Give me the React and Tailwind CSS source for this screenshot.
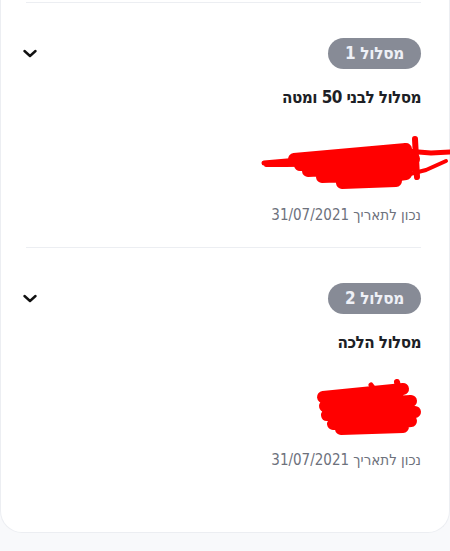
import React from "react";

const FONT = "font-['DejaVu_Sans_Condensed','Liberation_Sans','DejaVu_Sans',sans-serif]";

function Chevron() {
  return (
    <svg width="14" height="9" viewBox="0 0 14 9" className="block -ml-[3px]">
      <path d="M1.5 2 L7 7 L12.5 2" fill="none" stroke="#111" strokeWidth="2.4" strokeLinecap="round" strokeLinejoin="round" />
    </svg>
  );
}

function ScribbleWide() {
  return (
    <svg width="195" height="60" viewBox="0 0 195 60" className="absolute top-[26px] right-[-30px] overflow-visible">
      <g fill="none" stroke="#ff0000" strokeLinecap="round" strokeLinejoin="round">
        <path d="M8 28 C40 25 80 22 110 20 L150 16 L175 18 L194 17" strokeWidth="5" />
        <path d="M10 30 C50 30 90 30 130 27" strokeWidth="4" />
        <path d="M38 24 L150 14 L44 30 L158 24 L52 36 L155 31 L66 42 L150 39 L86 48 L140 46" strokeWidth="12" />
        <path d="M159 4 L161 42" strokeWidth="6" />
        <path d="M150 40 L170 35 L190 26" strokeWidth="4" />
      </g>
    </svg>
  );
}

function ScribbleSmall() {
  return (
    <svg width="115" height="60" viewBox="0 0 115 60" className="absolute top-[25px] right-[-5px] overflow-visible">
      <g fill="none" stroke="#ff0000" strokeLinecap="round" strokeLinejoin="round">
        <path d="M12 18 L92 10 L14 27 L100 22 L16 36 L104 33 L22 45 L100 42 L30 50 L92 48" strokeWidth="12" />
        <path d="M86 3 L90 20" strokeWidth="6" />
        <path d="M60 6 L66 14" strokeWidth="5" />
      </g>
    </svg>
  );
}

function Track({ num, title, scribble, last }) {
  return (
    <div className={`border-t border-[#eceef2] pt-[35px] ${last ? "pb-[62px]" : "pb-[22px]"}`}>
      <div className="flex items-center justify-between">
        <span className="h-[31px] px-[17px] rounded-full bg-[#878b96] text-[#eef0f6] text-[17px] font-bold tracking-[-0.3px] flex items-center leading-none">
          מסלול {num}
        </span>
        <Chevron />
      </div>
      <div className="mt-[16px] h-[24px] leading-[24px] text-[17px] font-bold tracking-[-0.6px] text-[#1d1f26]">{title}</div>
      <div className="relative h-[96px]">{scribble}</div>
      <div className="h-[20px] leading-[20px] text-[15px] text-[#6d717c]">נכון לתאריך 31/07/2021</div>
    </div>
  );
}

export default function App() {
  return (
    <div className={`min-h-[551px] w-[450px] bg-[#f8f9fb] overflow-hidden ${FONT}`} dir="rtl">
      <div className="ml-[-2px] w-[450px] bg-white border border-t-0 border-[#eceef2] rounded-b-[22px] pr-[28px] pl-[25px] pt-[2px]">
        <Track num="1" title="מסלול לבני 50 ומטה" scribble={<ScribbleWide />} />
        <Track num="2" title="מסלול הלכה" scribble={<ScribbleSmall />} last />
      </div>
    </div>
  );
}
